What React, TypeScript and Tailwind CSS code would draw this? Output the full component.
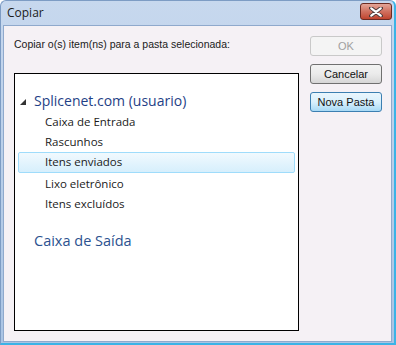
import React from "react";

const seg = { fontFamily: '"Open Sans", "Noto Sans", sans-serif' };
const tah = { fontFamily: '"Liberation Sans", Arial, sans-serif' };

export default function App() {
  return (
    <div className="w-[396px] h-[345px] flex flex-col bg-gradient-to-b from-[#c7d8ee] to-[#aac4e4] border-r-[2px] border-b-[2px] border-[#3bb3e6] rounded-t-[6px] border-l border-l-[#7d9cc4] border-t border-t-[#7d9cc4] overflow-hidden">
      <div className="h-[24px] flex items-center justify-between pl-[6px] pr-[2px]">
        <span className="text-[12px] text-[#1b1b1b] leading-none" style={seg}>Copiar</span>
        <div className="w-[32px] h-[17px] mt-[-3px] rounded-[3px] border border-[#6b2a22] bg-gradient-to-b from-[#e3a597] via-[#d0705f] to-[#c0442f] flex items-center justify-center">
          <svg width="14" height="10" viewBox="0 0 14 10">
            <path d="M2 1 L12 9 M12 1 L2 9" stroke="#4a3a3a" strokeWidth="4" strokeLinecap="round" />
            <path d="M2.3 1.3 L11.7 8.7 M11.7 1.3 L2.3 8.7" stroke="#ffffff" strokeWidth="2.2" strokeLinecap="round" />
          </svg>
        </div>
      </div>
      <div className="flex-1 mx-[2px] mb-[1px] border border-[#8fa9cc] bg-[#f5f1f5] flex pl-[10px] pr-[10px]">
        <div className="flex flex-col w-[285px]">
          <div className="pt-[11px] h-[47px] text-[10.5px] text-[#1a1a1a]" style={tah}>
            Copiar o(s) item(ns) para a pasta selecionada:
          </div>
          <div className="w-[285px] h-[258px] border border-black bg-white flex flex-col px-[3px] pt-[15px]">
            <div className="h-[23px] flex items-center pl-[2px]">
              <svg width="8" height="8" viewBox="0 0 8 8" className="mr-[6px] mt-[2px]">
                <path d="M6 1 L6 7 L0 7 Z" fill="#333333" />
              </svg>
              <span className="text-[14px] text-[#1f3f86] leading-none" style={seg}>Splicenet.com (usuario)</span>
            </div>
            {["Caixa de Entrada", "Rascunhos", "Itens enviados", "Lixo eletrônico", "Itens excluídos"].map((t) => (
              <div
                key={t}
                className={
                  t === "Itens enviados"
                    ? "h-[21px] mb-[1px] flex items-center pl-[26px] pb-[2px] rounded-[2px] border border-[#9fdcfb] bg-gradient-to-b from-[#f1f9fe] to-[#d6effc]"
                    : "h-[20px] flex items-center pl-[27px]"
                }
              >
                <span className="text-[11.5px] text-[#1a1a1a] leading-none" style={seg}>{t}</span>
              </div>
            ))}
            <div className="h-[34px] flex items-end pl-[16px]">
              <span className="text-[14.5px] text-[#2b518f] leading-none" style={seg}>Caixa de Saída</span>
            </div>
          </div>
        </div>
        <div className="flex flex-col ml-[11px] pt-[10px] gap-[8px]">
          <div className="w-[72px] h-[20px] rounded-[3px] border border-[#c9c9c9] bg-[#f4f4f4] flex items-center justify-center text-[11px] text-[#a0a0a0]" style={tah}>OK</div>
          <div className="w-[72px] h-[20px] rounded-[3px] border border-[#707070] bg-gradient-to-b from-[#f3f3f3] via-[#ebebeb] to-[#d6d6d6] flex items-center justify-center text-[11px] text-[#111]" style={tah}>Cancelar</div>
          <div className="w-[72px] h-[20px] rounded-[3px] border border-[#3c7fb1] bg-gradient-to-b from-[#eaf6fd] via-[#d9f0fc] to-[#a7d9f5] flex items-center justify-center text-[11px] text-[#111]" style={tah}>Nova Pasta</div>
        </div>
      </div>
    </div>
  );
}
